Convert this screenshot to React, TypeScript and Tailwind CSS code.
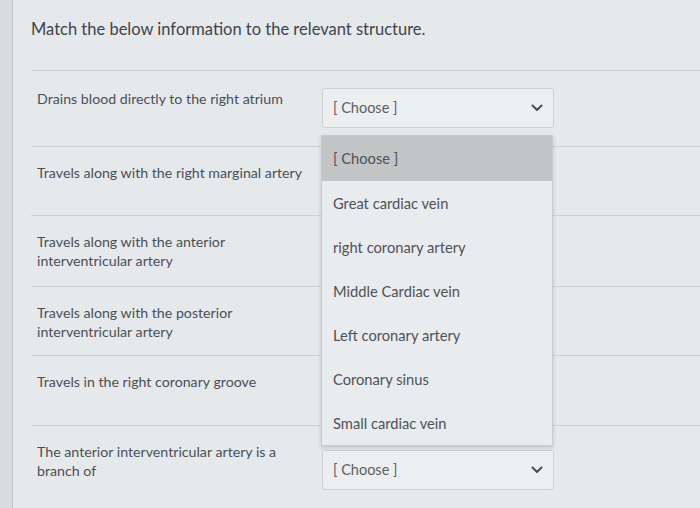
import React from "react";

const rows: { text: string; h: string; pt: string }[] = [
  { text: "Drains blood directly to the right atrium", h: "h-[76px]", pt: "pt-[18px]" },
  { text: "Travels along with the right marginal artery", h: "h-[69px]", pt: "pt-[16px]" },
  { text: "Travels along with the anterior interventricular artery", h: "h-[71px]", pt: "pt-[16px]" },
  { text: "Travels along with the posterior interventricular artery", h: "h-[69px]", pt: "pt-[16px]" },
  { text: "Travels in the right coronary groove", h: "h-[70px]", pt: "pt-[16px]" },
  { text: "The anterior interventricular artery is a branch of", h: "h-[90px]", pt: "pt-[16px]" },
];

const options = [
  "Great cardiac vein",
  "right coronary artery",
  "Middle Cardiac vein",
  "Left coronary artery",
  "Coronary sinus",
  "Small cardiac vein",
];

function Chevron() {
  return (
    <svg width="12" height="8" viewBox="0 0 12 8" fill="none">
      <path d="M1.5 1.5 L6 6 L10.5 1.5" stroke="#4a4f55" strokeWidth="2" strokeLinecap="round" strokeLinejoin="round" />
    </svg>
  );
}

function Select({ top }: { top: string }) {
  return (
    <div className={`ml-[9px] ${top} w-[232px] h-[40px] shrink-0 flex items-center justify-between pl-[10px] pr-[10px] bg-[#eceef0] border border-[#cdd0d3] rounded-[3px] text-[14.5px] text-[#5a5f65]`}>
      <span>[ Choose ]</span>
      <Chevron />
    </div>
  );
}

export default function App() {
  return (
    <div className="w-[700px] h-[508px] overflow-hidden bg-[#d9dcdf] font-['Lato',sans-serif] text-[#4a4f55]">
      <div className="ml-[12px] h-full border-l border-[#c4c7ca] bg-[#e6e9ec] relative">
        <div className="h-[70px] pl-[18px] pt-[17px] text-[16.5px] text-[#3f444a]">
          Match the below information to the relevant structure.
        </div>
        <div className="ml-[18px]">
          {rows.map((r, i) => (
            <div key={i} className={`${r.h} border-t border-[#cfd2d5] flex items-start pl-[6px]`}>
              <div className={`w-[276px] shrink-0 ${r.pt} text-[14.2px] leading-[19px]`}>{r.text}</div>
              {i === 0 && <Select top="mt-[17px]" />}
              {i === 5 && <Select top="mt-[24px]" />}
            </div>
          ))}
        </div>
        <div className="absolute left-[308px] top-[135px] w-[232px] bg-[#e9ecee] border border-[#c9ccce] shadow-[0_2px_4px_rgba(0,0,0,0.15)] text-[14.7px] text-[#4d5258]">
          <div className="h-[45px] bg-[#c2c4c6] flex items-center pl-[11px]">[ Choose ]</div>
          {options.map((o) => (
            <div key={o} className="h-[44px] flex items-center pl-[11px]">
              {o}
            </div>
          ))}
        </div>
      </div>
    </div>
  );
}
